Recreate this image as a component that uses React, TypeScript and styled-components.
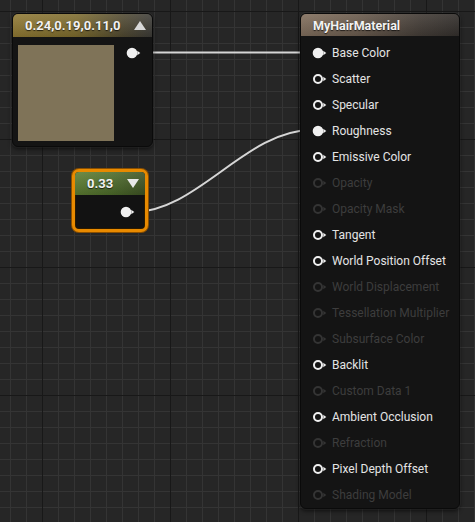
import React from "react";
import styled, { createGlobalStyle } from "styled-components";

const GlobalStyle = createGlobalStyle`
  html, body { margin: 0; padding: 0; background: #262626; overflow: hidden; }
  * { box-sizing: border-box; }
`;

const Canvas = styled.div`
  position: relative;
  width: 475px;
  height: 522px;
  overflow: hidden;
  font-family: Roboto, "Liberation Sans", sans-serif;
  background-color: #262626;
  background-image:
    linear-gradient(to right, #181818 1px, transparent 1px),
    linear-gradient(to bottom, #181818 1px, transparent 1px),
    linear-gradient(to right, #343434 1px, transparent 1px),
    linear-gradient(to bottom, #343434 1px, transparent 1px);
  background-size: 128px 128px, 128px 128px, 16px 16px, 16px 16px;
  background-position: 42px 11px, 42px 11px, 10px 11px, 10px 11px;
`;

const Wires = styled.svg`
  position: absolute;
  left: 0;
  top: 0;
  pointer-events: none;
`;

const Node = styled.div<{ $x: number; $y: number; $w: number; $h: number }>`
  position: absolute;
  left: ${(p) => p.$x}px;
  top: ${(p) => p.$y}px;
  width: ${(p) => p.$w}px;
  height: ${(p) => p.$h}px;
  display: flex;
  flex-direction: column;
  background: #141414;
  border: 1px solid #0a0a0a;
  border-radius: 6px;
  box-shadow: 0 0 0 1px rgba(255, 255, 255, 0.04), 0 2px 4px rgba(0, 0, 0, 0.6);
  overflow: hidden;
`;

const SelectedNode = styled(Node)`
  border: 3px solid #e88a00;
  border-radius: 7px;
  box-shadow: 0 0 0 1px #8a4f00, inset 0 0 0 1px #2a1a00;
  background: #121212;
`;

const Header = styled.div<{ $kind: "gold" | "brown" | "green"; $h: number; $size: number }>`
  height: ${(p) => p.$h}px;
  flex: none;
  display: flex;
  align-items: center;
  justify-content: space-between;
  padding: 0 6px 0 12px;
  color: #f2f2f2;
  font-weight: 700;
  font-size: ${(p) => p.$size}px;
  text-shadow: 0 1px 1px rgba(0, 0, 0, 0.7);
  background: ${(p) =>
    p.$kind === "gold"
      ? "linear-gradient(to bottom, rgba(255,255,255,0.12), rgba(0,0,0,0.12)), linear-gradient(to right, #8f7832 0%, #7d6b2d 45%, #4e4730 80%, #3b3a36 100%)"
      : p.$kind === "brown"
      ? "linear-gradient(to bottom, rgba(255,255,255,0.08), rgba(0,0,0,0.15)), linear-gradient(to right, #857260 0%, #6e5f51 35%, #463f39 75%, #35312e 100%)"
      : "linear-gradient(to bottom, rgba(255,255,255,0.1), rgba(0,0,0,0.15)), linear-gradient(to right, #5e7f33 0%, #4f6e2b 50%, #3e5324 100%)"};
`;

const Tri = styled.span<{ $dir: "up" | "down" }>`
  width: 0;
  height: 0;
  border-left: 6px solid transparent;
  border-right: 6px solid transparent;
  ${(p) =>
    p.$dir === "up"
      ? "border-bottom: 9px solid #d8d8d8;"
      : "border-top: 9px solid #e8e8e8;"}
`;

const ColorBody = styled.div`
  flex: 1;
  display: flex;
  align-items: flex-start;
  padding: 8px 0 0 5px;
  gap: 12px;
`;

const Swatch = styled.div`
  width: 96px;
  height: 96px;
  background: #7f7358;
`;

const OutPin = styled.div<{ $top: number }>`
  margin-top: ${(p) => p.$top}px;
  display: flex;
`;

const ScalarBody = styled.div`
  flex: 1;
  display: flex;
  justify-content: flex-end;
  align-items: center;
  padding-right: 10px;
`;

const PinList = styled.div`
  display: flex;
  flex-direction: column;
  padding: 4px 0 0 11px;
`;

const PinRow = styled.div<{ $off: boolean }>`
  height: 26px;
  display: flex;
  align-items: center;
  gap: 5px;
  font-size: 12px;
  color: ${(p) => (p.$off ? "#3d3d3d" : "#e4e4e4")};
  white-space: nowrap;
`;

function PinIcon({ filled, off }: { filled?: boolean; off?: boolean }) {
  const c = off ? "#343434" : "#f0f0f0";
  return (
    <svg width="15" height="12" viewBox="0 0 15 12">
      {filled ? (
        <circle cx="6" cy="6" r="5.3" fill={c} />
      ) : (
        <circle cx="6" cy="6" r="4" fill="none" stroke={c} strokeWidth="2" />
      )}
      <polygon points="11.3,3.8 14.3,6 11.3,8.2" fill={c} />
    </svg>
  );
}

type Pin = { name: string; off?: boolean; filled?: boolean };

const pins: Pin[] = [
  { name: "Base Color", filled: true },
  { name: "Scatter" },
  { name: "Specular" },
  { name: "Roughness", filled: true },
  { name: "Emissive Color" },
  { name: "Opacity", off: true },
  { name: "Opacity Mask", off: true },
  { name: "Tangent" },
  { name: "World Position Offset" },
  { name: "World Displacement", off: true },
  { name: "Tessellation Multiplier", off: true },
  { name: "Subsurface Color", off: true },
  { name: "Backlit" },
  { name: "Custom Data 1", off: true },
  { name: "Ambient Occlusion" },
  { name: "Refraction", off: true },
  { name: "Pixel Depth Offset" },
  { name: "Shading Model", off: true },
];

export default function App() {
  return (
    <>
      <GlobalStyle />
      <Canvas>
        <Wires width="475" height="522" viewBox="0 0 475 522">
          <path d="M138 52.5 L312 52.5" stroke="#d6d6d6" strokeWidth="2" fill="none" />
          <path
            d="M131 212.5 C 198 212.5, 245 130, 312 130"
            stroke="#d6d6d6"
            strokeWidth="2"
            fill="none"
          />
        </Wires>

        <Node $x={12} $y={13} $w={141} $h={134}>
          <Header $kind="gold" $h={23} $size={13}>
            <span>0.24,0.19,0.11,0</span>
            <Tri $dir="up" />
          </Header>
          <ColorBody>
            <Swatch />
            <OutPin $top={2}>
              <PinIcon filled />
            </OutPin>
          </ColorBody>
        </Node>

        <SelectedNode $x={72} $y={169} $w={76} $h={63}>
          <Header $kind="green" $h={23} $size={13}>
            <span>0.33</span>
            <Tri $dir="down" />
          </Header>
          <ScalarBody>
            <PinIcon filled />
          </ScalarBody>
        </SelectedNode>

        <Node $x={300} $y={13} $w={160} $h={496}>
          <Header $kind="brown" $h={22} $size={12.5}>
            <span>MyHairMaterial</span>
          </Header>
          <PinList>
            {pins.map((p) => (
              <PinRow key={p.name} $off={!!p.off}>
                <PinIcon filled={p.filled} off={p.off} />
                <span>{p.name}</span>
              </PinRow>
            ))}
          </PinList>
        </Node>
      </Canvas>
    </>
  );
}
